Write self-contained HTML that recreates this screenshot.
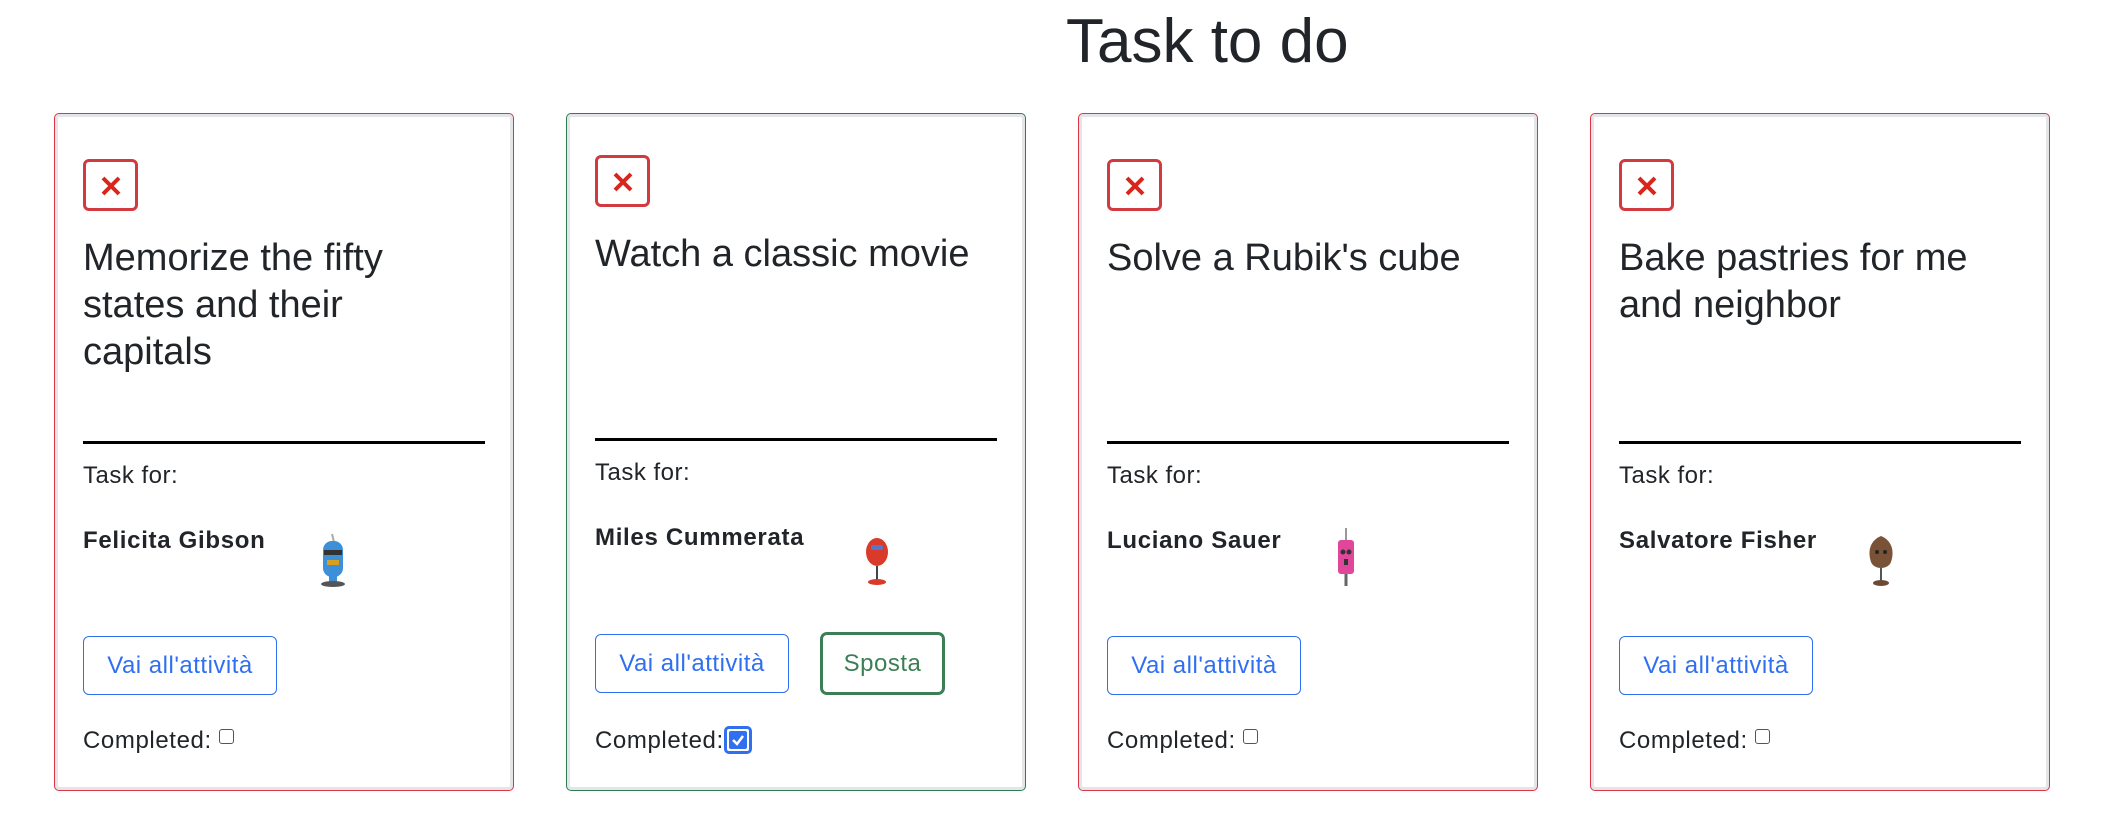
<!DOCTYPE html>
<html><head><meta charset="utf-8"><style>
*{box-sizing:border-box;margin:0;padding:0}
body{width:2106px;height:834px;background:#fff;font-family:"Liberation Sans",Arial,sans-serif;color:#212529;position:relative;overflow:hidden}
h1{position:absolute;left:1066px;top:6px;font-size:62px;font-weight:500;letter-spacing:0px}
.card{position:absolute;top:113px;width:460px;height:678px;border:1px solid #dc3545;border-radius:5px;box-shadow:inset 0 0 0 3px #e3e5e9}
.card.g{border-color:#2e7d4f}
.x{position:absolute;left:28px;top:45px;width:55px;height:52px;border:3px solid #d13b40;border-radius:6px}
.x svg{position:absolute;left:14px;top:13px}
.t{position:absolute;left:28px;top:121px;width:382px;font-size:38px;line-height:47px;font-weight:500}
.hr{position:absolute;left:28px;top:327px;width:402px;height:3px;background:#000}
.tf{position:absolute;left:28px;top:348px;font-size:24px;letter-spacing:0.5px}
.n{position:absolute;left:28px;top:413px;font-size:24px;font-weight:bold;letter-spacing:0.7px}
.av{position:absolute;top:418px}
.b{position:absolute;left:28px;top:522px;width:194px;height:59px;border:1px solid #2f6ff0;border-radius:6px;color:#2f6ff0;font-size:24px;letter-spacing:0.5px;line-height:57px;text-align:center}
.s{position:absolute;left:253px;top:520px;width:125px;height:63px;border:3px solid #3d7f55;border-radius:7px;color:#3d7f55;font-size:24px;letter-spacing:0.5px;line-height:57px;text-align:center}
.c{position:absolute;left:28px;top:613px;font-size:24px;letter-spacing:0.6px}
.cb{display:inline-block;width:15px;height:15px;border:1.5px solid #555;border-radius:3px;vertical-align:4px;margin-left:0px}
.cbc{display:inline-block;width:28px;height:28px;border:3px solid #2f6ff0;border-radius:5px;vertical-align:-6px;position:relative;background:#fff}
</style></head><body>
<h1>Task to do</h1>

<div class="card" style="left:54px">
<div class="x"><svg width="22" height="22" viewBox="0 0 22 22"><path d="M3 3L19 19M19 3L3 19" stroke="#d9261c" stroke-width="4"/></svg></div>
<div class="t">Memorize the fifty states and their capitals</div>
<div class="hr" style="top:327px"></div>
<div class="tf">Task for:</div>
<div class="n">Felicita Gibson</div>
<svg class="av" style="left:258px" width="40" height="56" viewBox="0 0 40 56"><path d="M19 2L21 10" stroke="#aaa" stroke-width="2"/><rect x="10" y="9" width="20" height="36" rx="9" fill="#3d8fd8"/><rect x="11" y="18" width="18" height="5" fill="#333"/><rect x="14" y="28" width="12" height="5" fill="#d9a020"/><rect x="16" y="44" width="8" height="6" fill="#3d8fd8"/><ellipse cx="20" cy="52" rx="12" ry="3" fill="#555"/></svg>
<div class="b">Vai all'attività</div>
<div class="c">Completed: <span class="cb"></span></div>
</div>

<div class="card g" style="left:566px">
<div class="x" style="top:41px"><svg width="22" height="22" viewBox="0 0 22 22"><path d="M3 3L19 19M19 3L3 19" stroke="#d9261c" stroke-width="4"/></svg></div>
<div class="t" style="top:117px">Watch a classic movie</div>
<div class="hr" style="top:324px"></div>
<div class="tf" style="top:345px">Task for:</div>
<div class="n" style="top:410px">Miles Cummerata</div>
<svg class="av" style="left:292px;top:420px" width="36" height="54" viewBox="0 0 36 54"><ellipse cx="18" cy="18" rx="11" ry="14" fill="#d93a2a"/><rect x="12" y="11" width="12" height="5" rx="2" fill="#5577cc"/><path d="M18 32V46" stroke="#444" stroke-width="2"/><ellipse cx="18" cy="48" rx="9" ry="3" fill="#d93a2a"/></svg>
<div class="b" style="top:520px">Vai all'attività</div>
<div class="s" style="top:518px">Sposta</div>
<div class="c" style="top:612px">Completed:<span class="cbc"><svg style="position:absolute;left:2px;top:2px" width="18" height="18" viewBox="0 0 18 18"><rect width="18" height="18" rx="2" fill="#2f6ff0"/><path d="M4 9L8 13L14 5" stroke="#fff" stroke-width="2.5" fill="none"/></svg></span></div>
</div>

<div class="card" style="left:1078px">
<div class="x"><svg width="22" height="22" viewBox="0 0 22 22"><path d="M3 3L19 19M19 3L3 19" stroke="#d9261c" stroke-width="4"/></svg></div>
<div class="t">Solve a Rubik's cube</div>
<div class="hr"></div>
<div class="tf">Task for:</div>
<div class="n">Luciano Sauer</div>
<svg class="av" style="left:252px;top:412px" width="30" height="62" viewBox="0 0 30 62"><path d="M15 2V14" stroke="#999" stroke-width="2"/><rect x="7" y="14" width="16" height="34" rx="3" fill="#e0479a"/><circle cx="12" cy="26" r="2.5" fill="#333"/><circle cx="18" cy="26" r="2.5" fill="#333"/><rect x="13" y="33" width="4" height="6" fill="#333"/><path d="M15 48V60" stroke="#666" stroke-width="3"/></svg>
<div class="b">Vai all'attività</div>
<div class="c">Completed: <span class="cb"></span></div>
</div>

<div class="card" style="left:1590px">
<div class="x"><svg width="22" height="22" viewBox="0 0 22 22"><path d="M3 3L19 19M19 3L3 19" stroke="#d9261c" stroke-width="4"/></svg></div>
<div class="t">Bake pastries for me and neighbor</div>
<div class="hr"></div>
<div class="tf">Task for:</div>
<div class="n">Salvatore Fisher</div>
<svg class="av" style="left:272px;top:418px" width="36" height="56" viewBox="0 0 36 56"><path d="M18 4C28 8 32 18 28 30C25 38 11 38 8 30C4 18 8 8 18 4Z" fill="#7a5238"/><circle cx="14" cy="20" r="2" fill="#222"/><circle cx="22" cy="20" r="2" fill="#222"/><path d="M18 36V50" stroke="#555" stroke-width="2"/><ellipse cx="18" cy="51" rx="8" ry="3" fill="#6b4a34"/></svg>
<div class="b">Vai all'attività</div>
<div class="c">Completed: <span class="cb"></span></div>
</div>
</body></html>
